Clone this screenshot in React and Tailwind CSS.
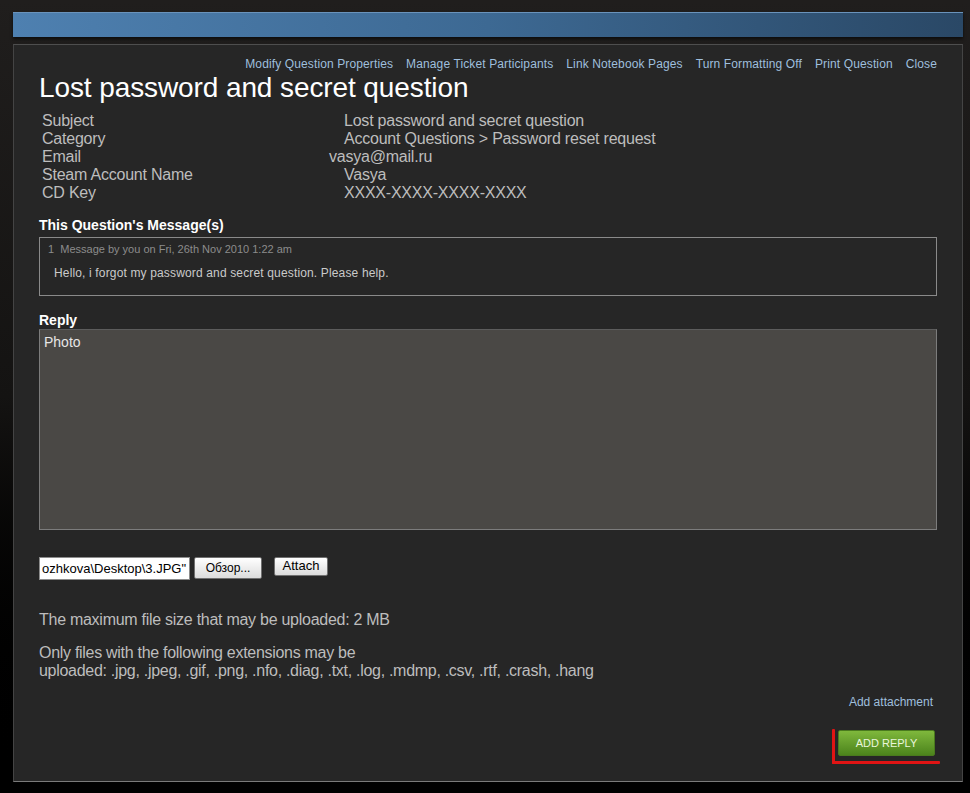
export default function App() {
  const font = { fontFamily: '"Liberation Sans", Arial, sans-serif' };
  const rows = [
    ["Subject", "Lost password and secret question", ""],
    ["Category", "Account Questions > Password reset request", ""],
    ["Email", "vasya@mail.ru", "-ml-[15px]"],
    ["Steam Account Name", "Vasya", ""],
    ["CD Key", "XXXX-XXXX-XXXX-XXXX", ""],
  ];
  const links = [
    "Modify Question Properties",
    "Manage Ticket Participants",
    "Link Notebook Pages",
    "Turn Formatting Off",
    "Print Question",
    "Close",
  ];
  return (
    <div
      style={font}
      className="w-[970px] h-[793px] overflow-hidden bg-gradient-to-b from-[#201e1d] via-[#141312] to-[#000] pt-[12px] pl-[13px]"
    >
      <div className="w-[950px] h-[25px] border-t border-[#6a93bb] bg-gradient-to-r from-[#4e80b0] via-[#3d6993] to-[#2a4866] shadow-[0_2px_3px_rgba(0,0,0,0.6)]" />
      <div className="relative mt-[7px] w-[950px] h-[738px] bg-[#262626] border border-[#444] border-t-[#4e4e4e] border-b-[#7a7a7a] pl-[25px] pr-[25px] pt-[12px] text-[#c2c2c2]">
        <div className="flex justify-end gap-[13px] text-[12px] leading-[14px] tracking-[0.12px] text-[#9fbfdd]">
          {links.map((l) => (
            <span key={l}>{l}</span>
          ))}
        </div>
        <h1 className="mt-px text-[28px] leading-[32px] tracking-[-0.1px] text-white">
          Lost password and secret question
        </h1>
        <div className="mt-[8px] ml-[3px] text-[16px] leading-[18px] tracking-[-0.22px] text-[#bdbdbd]">
          {rows.map(([k, v, c]) => (
            <div key={k} className="flex">
              <div className="w-[302px]">{k}</div>
              <div className={c}>{v}</div>
            </div>
          ))}
        </div>
        <div className="mt-[15px] text-[14px] leading-[16px] font-bold text-white">
          This Question's Message(s)
        </div>
        <div className="mt-[4px] h-[59px] border border-[#8a8a8a] pl-[8px] pt-[5px]">
          <div className="text-[11px] leading-[13px] text-[#8c8c8c]">
            1&nbsp;&nbsp;Message by you on Fri, 26th Nov 2010 1:22 am
          </div>
          <div className="mt-[10px] ml-[6px] text-[12px] leading-[14px] tracking-[0.15px] text-[#cacaca]">
            Hello, i forgot my password and secret question. Please help.
          </div>
        </div>
        <div className="mt-[16px] text-[14px] leading-[16px] font-bold text-white">
          Reply
        </div>
        <div className="mt-px h-[201px] bg-[#4a4845] border border-[#7c7c7c] border-t-[#5c5c5c] pl-[4px] pt-[4px] text-[14px] leading-[17px] text-[#e6e6e6]">
          Photo
        </div>
        <div className="mt-[27px] flex items-start">
          <div className="w-[151px] h-[23px] bg-white border border-[#8c8c8c] pl-[2px] text-[13px] leading-[21px] text-black whitespace-nowrap overflow-hidden">
            ozhkova\Desktop\3.JPG"
          </div>
          <div className="ml-[4px] w-[68px] h-[22px] rounded-[2px] border border-[#707070] bg-gradient-to-b from-[#ffffff] to-[#dcdcdc] text-center text-[12px] leading-[20px] text-black">
            Обзор...
          </div>
          <div className="ml-[12px] w-[54px] h-[19px] rounded-[2px] border border-[#707070] bg-gradient-to-b from-[#ffffff] to-[#dcdcdc] text-center text-[13px] leading-[16px] text-black">
            Attach
          </div>
        </div>
        <div className="mt-[31px] text-[16px] leading-[18px] tracking-[-0.27px] text-[#bdbdbd]">
          The maximum file size that may be uploaded: 2 MB
        </div>
        <div className="mt-[15px] text-[16px] leading-[18px] tracking-[-0.29px] text-[#bdbdbd]">
          Only files with the following extensions may be
          <br />
          uploaded: .jpg, .jpeg, .gif, .png, .nfo, .diag, .txt, .log, .mdmp, .csv, .rtf, .crash, .hang
        </div>
        <div className="mt-[15px] pr-[4px] text-right text-[12px] leading-[14px] text-[#9fbfdd]">
          Add attachment
        </div>
        <div className="mt-[21px] flex justify-end pr-[2px]">
          <div className="w-[97px] h-[26px] rounded-[2px] border border-[#4a7a1e] bg-gradient-to-b from-[#7fb83c] to-[#4c841c] text-center text-[11px] leading-[24px] text-[#eaf6dc]">
            ADD REPLY
          </div>
        </div>
        <div className="absolute left-[818px] top-[684px] w-[3px] h-[35px] bg-[#e01414] rounded-[1px]" />
        <div className="absolute left-[818px] top-[716px] w-[108px] h-[3px] bg-[#e01414] rounded-[1px]" />
      </div>
    </div>
  );
}
